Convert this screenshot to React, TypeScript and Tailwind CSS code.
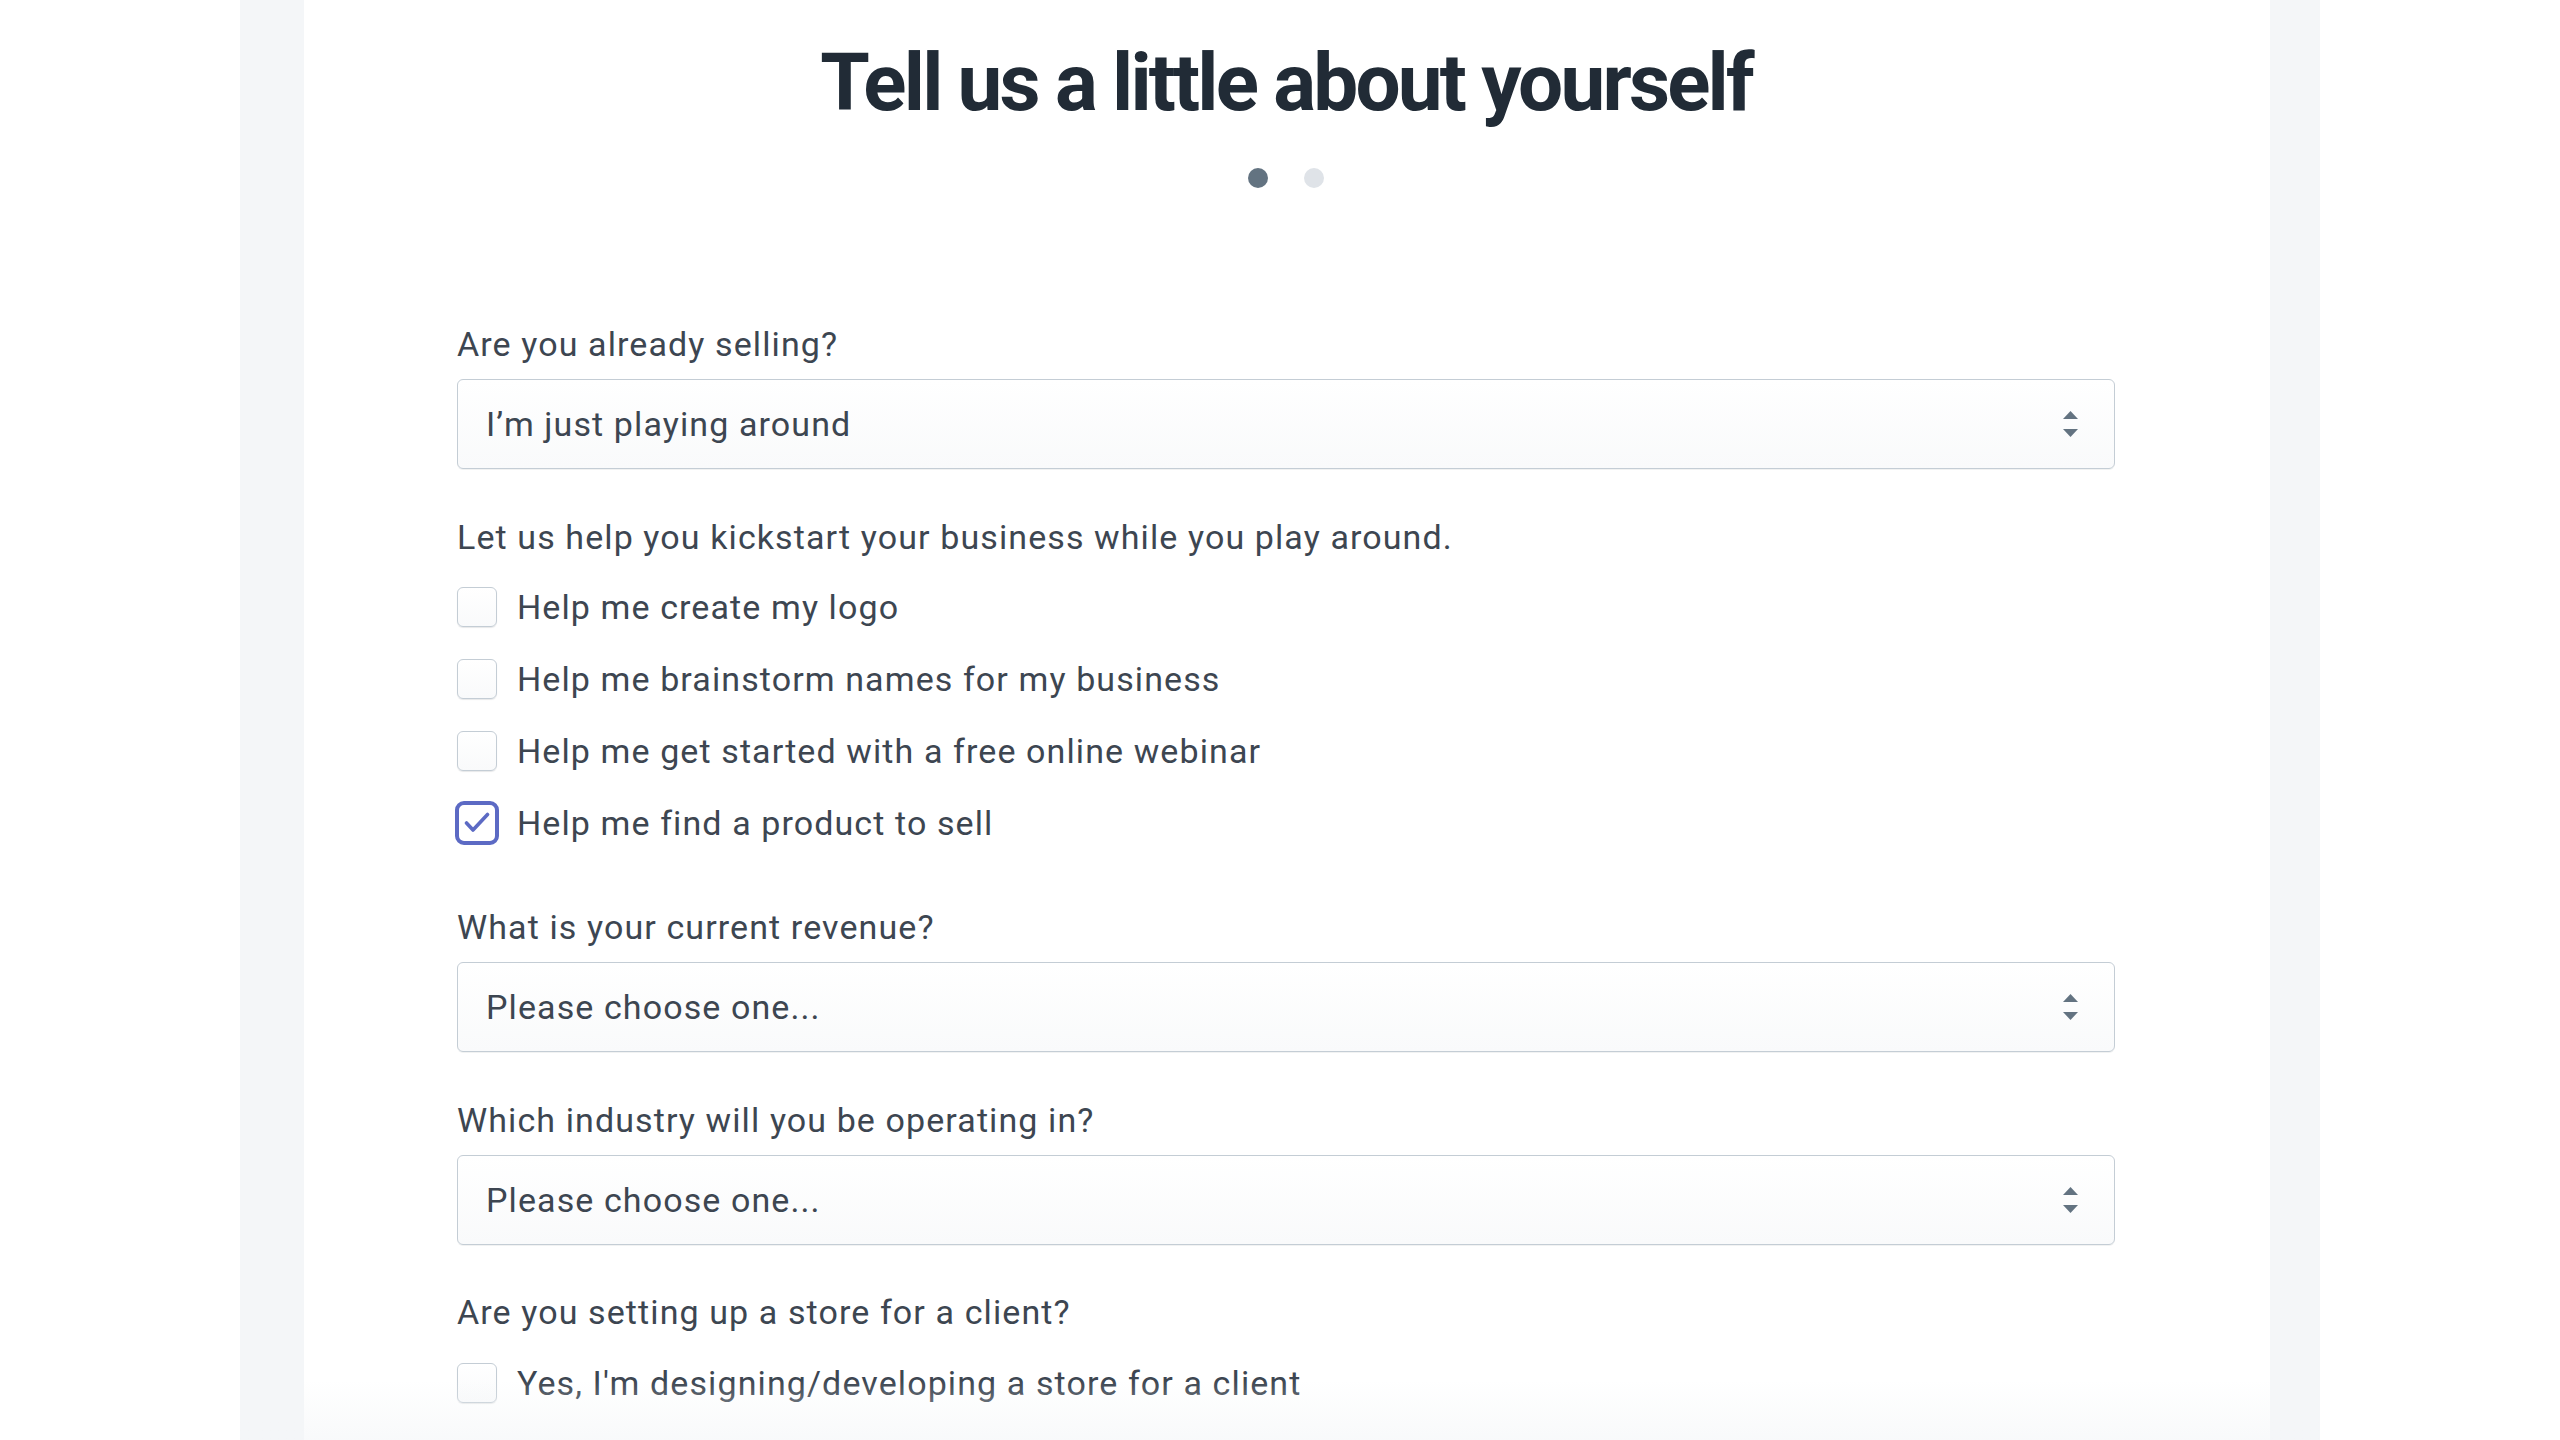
import { type ReactNode } from 'react'

const sans = "font-['Roboto','Liberation_Sans',Arial,sans-serif]"
const bodyText = `${sans} text-[34px] leading-[40px] tracking-[1.1px] text-[#3d4651]`

function Arrows() {
  return (
    <svg className="h-[26px] w-[15px] shrink-0" viewBox="0 0 15 26" fill="#637381">
      <path d="M7.5 0 L15 8 L0 8 Z" />
      <path d="M0 18 L15 18 L7.5 26 Z" />
    </svg>
  )
}

function FakeSelect({ value }: { value: string }) {
  return (
    <div className="flex h-[90px] items-center justify-between rounded-[6px] border border-[#c4cdd5] bg-gradient-to-b from-white to-[#f9fafb] pl-[28px] pr-[36px] shadow-[0_1px_0_rgba(22,29,37,0.06)]">
      <span className={bodyText}>{value}</span>
      <Arrows />
    </div>
  )
}

function Field({ label, value, className = '' }: { label: string; value: string; className?: string }) {
  return (
    <div className={className}>
      <p className={bodyText}>{label}</p>
      <div className="mt-[15px]">
        <FakeSelect value={value} />
      </div>
    </div>
  )
}

function Check({ label, checked }: { label: ReactNode; checked?: boolean }) {
  return (
    <div className="flex h-[40px] items-center gap-[20px]">
      {checked ? (
        <div className="-mx-[2px] grid h-[44px] w-[44px] shrink-0 place-items-center rounded-[9px] border-[4px] border-[#5c6ac4] bg-white">
          <svg className="h-[26px] w-[26px]" viewBox="0 0 26 26" fill="none" stroke="#5c6ac4" strokeWidth="3.6" strokeLinecap="round" strokeLinejoin="round">
            <path d="M2.5 13 L9 20 L23.5 4.5" />
          </svg>
        </div>
      ) : (
        <div className="h-[40px] w-[40px] shrink-0 rounded-[6px] border border-[#c4cdd5] bg-gradient-to-b from-white to-[#f9fafb] shadow-[0_1px_1px_rgba(22,29,37,0.1)]" />
      )}
      <span className={bodyText}>{label}</span>
    </div>
  )
}

export default function App() {
  return (
    <div className="h-[1440px] overflow-hidden bg-white">
      <div className="relative ml-[240px] h-full w-[2080px] bg-[#f4f6f8] pl-[64px] pr-[50px]">
        <div className="h-full bg-white pl-[153px] pr-[155px] pt-[43px]">
          <h1 className={`${sans} text-center text-[80px] font-bold leading-[80px] tracking-[-2.8px] text-[#212b36]`}>
            Tell us a little about yourself
          </h1>
          <div className="mt-[45px] flex justify-center gap-[36px]">
            <span className="h-[20px] w-[20px] rounded-full bg-[#637381]" />
            <span className="h-[20px] w-[20px] rounded-full bg-[#dfe3e8]" />
          </div>

          <div className="mt-[136px] flex flex-col">
            <Field label="Are you already selling?" value="I’m just playing around" />

            <p className={`mt-[48px] ${bodyText}`}>Let us help you kickstart your business while you play around.</p>
            <div className="mt-[30px] flex flex-col gap-[32px]">
              <Check label="Help me create my logo" />
              <Check label="Help me brainstorm names for my business" />
              <Check label="Help me get started with a free online webinar" />
              <Check label="Help me find a product to sell" checked />
            </div>

            <Field className="mt-[64px]" label="What is your current revenue?" value="Please choose one..." />
            <Field className="mt-[48px]" label="Which industry will you be operating in?" value="Please choose one..." />

            <p className={`mt-[47px] ${bodyText}`}>Are you setting up a store for a client?</p>
            <div className="mt-[31px]">
              <Check label="Yes, I'm designing/developing a store for a client" />
            </div>
          </div>
        </div>
        <div className="pointer-events-none absolute inset-x-0 bottom-0 h-[60px] bg-gradient-to-b from-transparent to-[#f4f6f8]/60" />
      </div>
    </div>
  )
}
